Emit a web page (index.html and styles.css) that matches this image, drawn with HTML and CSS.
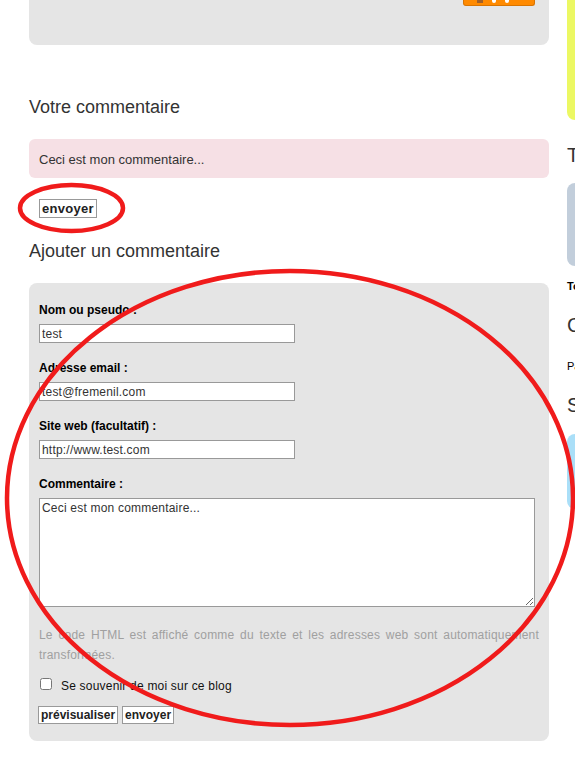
FILE: index.html
```html
<!DOCTYPE html>
<html lang="fr">
<head>
    <meta charset="UTF-8">
    <meta name="viewport" content="width=device-width, initial-scale=1.0">
    <title>Ajouter un commentaire</title>
    <link rel="stylesheet" href="styles.css">
</head>
<body>
    <div class="page">
        <div class="main">
            <div class="post">
                <div class="share">
                    <span class="share-icon"></span>
                    <span class="share-dot"></span>
                    <span class="share-dot"></span>
                </div>
            </div>

            <h2 class="preview-title">Votre commentaire</h2>
            <div class="preview">Ceci est mon commentaire...</div>
            <div class="preview-actions">
                <button class="btn btn-big">envoyer</button>
            </div>

            <h2 class="form-title">Ajouter un commentaire</h2>
            <form class="comment-form">
                <label for="nom">Nom ou pseudo :</label>
                <input type="text" id="nom" value="test">
                <label for="email">Adresse email :</label>
                <input type="text" id="email" value="test@fremenil.com">
                <label for="site">Site web (facultatif) :</label>
                <input type="text" id="site" value="http://www.test.com">
                <label for="commentaire">Commentaire :</label>
                <textarea id="commentaire">Ceci est mon commentaire...</textarea>
                <p class="help">Le code HTML est affiché comme du texte et les adresses web sont automatiquement transformées.</p>
                <div class="remember">
                    <input type="checkbox" id="remember">
                    <span>Se souvenir de moi sur ce blog</span>
                </div>
                <div class="form-actions">
                    <button type="button" class="btn">prévisualiser</button>
                    <button type="button" class="btn">envoyer</button>
                </div>
            </form>
        </div>

        <div class="sidebar">
            <div class="side-box yellow"></div>
            <h3 class="side-title first">Tags</h3>
            <div class="side-box grey"></div>
            <p class="side-link">Tous les tags</p>
            <h3 class="side-title">Catégories</h3>
            <p class="side-text">Pas de catégorie</p>
            <h3 class="side-title">Syndication</h3>
            <div class="side-box blue"></div>
        </div>
    </div>

    <svg class="marks" width="575" height="762" viewBox="0 0 575 762">
        <ellipse cx="71.5" cy="208" rx="51.5" ry="23" fill="none" stroke="#f01b1b" stroke-width="4.5"/>
        <ellipse cx="290" cy="498" rx="283" ry="227" fill="none" stroke="#f01b1b" stroke-width="4.5"/>
    </svg>
</body>
</html>
```

FILE: styles.css
```css
body {
    margin: 0;
    font-family: "Liberation Sans", Arial, sans-serif;
    font-size: 12px;
    color: #333;
    background: #fff;
    overflow: hidden;
}
.page {
    display: flex;
    align-items: flex-start;
    gap: 18px;
    padding-left: 29px;
    width: 800px;
}
.main {
    width: 520px;
    flex: none;
}
.sidebar {
    width: 220px;
    flex: none;
}

/* bas de l'article precedent */
.post {
    height: 45px;
    background: #e5e5e5;
    border-radius: 0 0 8px 8px;
    display: flex;
    justify-content: flex-end;
    padding-right: 14px;
    box-sizing: border-box;
}
.share {
    width: 72px;
    height: 6px;
    background: #ff8a00;
    border: 1px solid #d97400;
    border-top: none;
    border-radius: 0 0 3px 3px;
    display: flex;
    align-items: flex-start;
    gap: 9px;
    padding-left: 13px;
    box-sizing: border-box;
}
.share-icon {
    width: 6px;
    height: 3px;
    background: #a0602a;
}
.share-dot {
    width: 4px;
    height: 3px;
    border-radius: 0 0 3px 3px;
    background: #fff;
}

h2 {
    font-size: 18px;
    font-weight: normal;
    line-height: 22px;
    color: #333;
    margin: 0;
}
.preview-title {
    margin-top: 51px;
}
.preview {
    margin-top: 21px;
    height: 39px;
    line-height: 41px;
    padding: 0 10px;
    background: #f6e0e5;
    border-radius: 6px;
    font-size: 13px;
}
.preview-actions {
    display: flex;
    margin-top: 21px;
    padding-left: 10px;
}
.btn {
    font-family: "Liberation Sans", Arial, sans-serif;
    font-size: 12px;
    font-weight: bold;
    line-height: 14px;
    color: #222;
    background: #fff;
    border: 1px solid #999;
    padding: 1px 2px;
    margin: 0;
    border-radius: 0;
}
.btn-big {
    font-size: 13px;
    line-height: 15px;
    letter-spacing: 0.3px;
}
.form-title {
    margin-top: 22px;
}

.comment-form {
    margin-top: 21px;
    background: #e5e5e5;
    border-radius: 8px;
    padding: 19px 10px 17px 10px;
}
.comment-form label {
    display: block;
    font-weight: bold;
    color: #000;
    line-height: 16px;
}
.comment-form input[type="text"] {
    display: block;
    width: 256px;
    height: 19px;
    box-sizing: border-box;
    margin: 6px 0 17px 0;
    padding: 0 2px;
    border: 1px solid #999;
    background: #fff;
    font-family: "Liberation Sans", Arial, sans-serif;
    font-size: 12px;
    letter-spacing: 0.2px;
    color: #333;
}
.comment-form textarea {
    display: block;
    width: 496px;
    height: 109px;
    box-sizing: border-box;
    margin: 6px 0 0 0;
    padding: 2px 2px;
    border: 1px solid #999;
    background: #fff;
    font-family: "Liberation Sans", Arial, sans-serif;
    font-size: 12px;
    letter-spacing: 0.2px;
    color: #333;
}
.help {
    width: 500px;
    margin: 18px 0 0 0;
    line-height: 20px;
    text-align: justify;
    color: #a0a0a0;
    letter-spacing: 0.2px;
}
.remember {
    display: flex;
    align-items: center;
    gap: 9px;
    margin-top: 12px;
    height: 14px;
    color: #111;
    letter-spacing: 0.2px;
}
.remember input {
    margin: 0 0 0 1px;
    width: 12px;
    height: 12px;
}
.remember span {
    position: relative;
    top: 2px;
}
.form-actions {
    display: flex;
    gap: 4px;
    margin-top: 15px;
    margin-left: -1px;
}

/* colonne de droite */
.side-box {
    border-radius: 8px;
}
.yellow {
    height: 120px;
    background: #ecf863;
    border-radius: 0 0 8px 8px;
}
.grey {
    height: 83px;
    margin-top: 16px;
    background: #c2cedb;
}
.blue {
    height: 75px;
    margin-top: 17px;
    background: #aadff8;
}
.side-title {
    font-size: 20px;
    font-weight: normal;
    line-height: 24px;
    color: #333;
    margin: 20px 0 0 0;
}
.side-title.first {
    margin-top: 23px;
}
.side-link {
    font-size: 11px;
    font-weight: bold;
    color: #000;
    line-height: 14px;
    margin: 13px 0 0 0;
}
.side-text {
    font-size: 11px;
    color: #000;
    line-height: 14px;
    margin: 22px 0 0 0;
}

.marks {
    position: absolute;
    top: 0;
    left: 0;
    pointer-events: none;
}
```
